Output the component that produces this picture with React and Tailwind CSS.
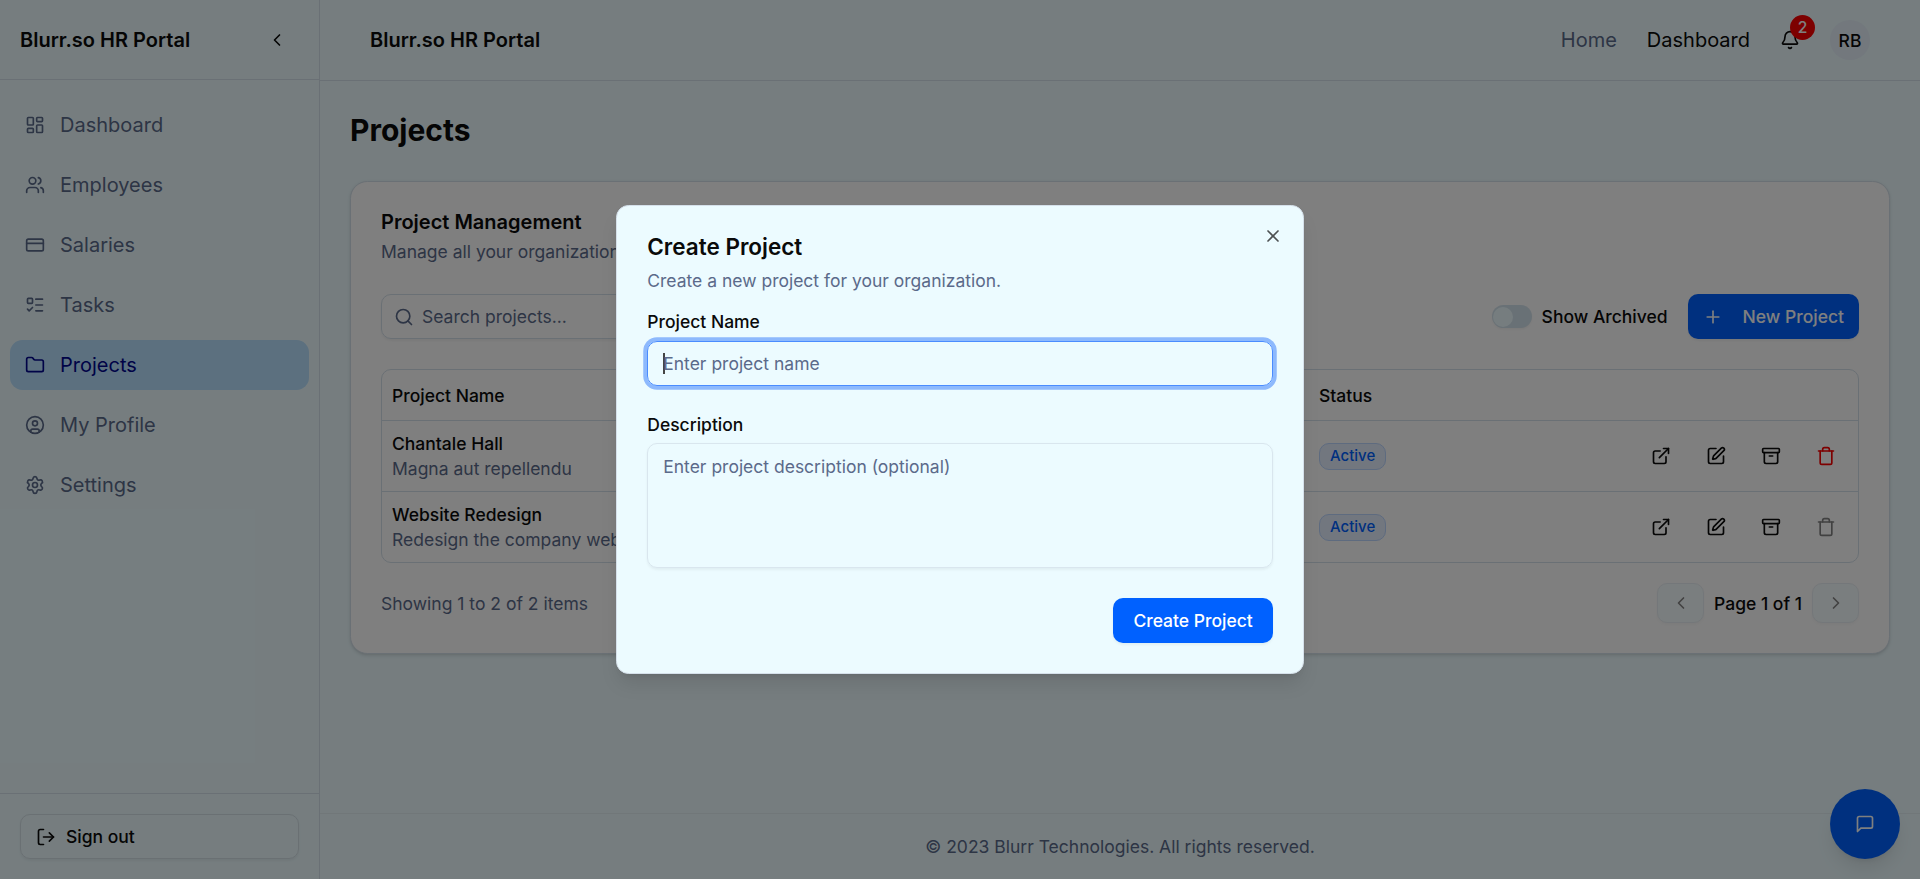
import React from "react";
import {
  Archive,
  Bell,
  ChevronLeft,
  ChevronRight,
  CreditCard,
  ExternalLink,
  Folder,
  LayoutDashboard,
  ListTodo,
  LogOut,
  Plus,
  Search,
  Settings,
  SquarePen,
  Users,
  X,
} from "lucide-react";

function UserCircle({ className }) {
  return (
    <svg className={className} viewBox="0 0 24 24" fill="none" stroke="currentColor" strokeWidth="2" strokeLinecap="round" strokeLinejoin="round">
      <circle cx="12" cy="12" r="10" />
      <circle cx="12" cy="10" r="3" />
      <path d="M7 20.662V19a2 2 0 0 1 2-2h6a2 2 0 0 1 2 2v1.662" />
    </svg>
  );
}

function Trash({ className }) {
  return (
    <svg className={className} viewBox="0 0 24 24" fill="none" stroke="currentColor" strokeWidth="2" strokeLinecap="round" strokeLinejoin="round">
      <path d="M3 6h18" />
      <path d="M19 6v14c0 1-1 2-2 2H7c-1 0-2-1-2-2V6" />
      <path d="M8 6V4c0-1 1-2 2-2h4c1 0 2 1 2 2v2" />
    </svg>
  );
}

function MessageSquare({ className }) {
  return (
    <svg className={className} viewBox="0 0 24 24" fill="none" stroke="currentColor" strokeWidth="2" strokeLinecap="round" strokeLinejoin="round">
      <path d="M21 15a2 2 0 0 1-2 2H7l-4 4V5a2 2 0 0 1 2-2h14a2 2 0 0 1 2 2z" />
    </svg>
  );
}

const navItems = [
  { label: "Dashboard", icon: LayoutDashboard },
  { label: "Employees", icon: Users },
  { label: "Salaries", icon: CreditCard },
  { label: "Tasks", icon: ListTodo },
  { label: "Projects", icon: Folder, active: true },
  { label: "My Profile", icon: UserCircle },
  { label: "Settings", icon: Settings },
];

const projects = [
  { name: "Chantale Hall", description: "Magna aut repellendu", canDelete: true },
  { name: "Website Redesign", description: "Redesign the company website", canDelete: false },
];

function Sidebar() {
  return (
    <aside className="flex w-64 shrink-0 flex-col border-r border-[#d5e0ea]">
      <div className="flex h-16 items-center justify-between border-b border-[#d5e0ea] px-4">
        <span className="font-semibold">Blurr.so HR Portal</span>
        <button className="flex size-9 items-center justify-center">
          <ChevronLeft className="size-4" />
        </button>
      </div>
      <nav className="flex flex-1 flex-col gap-2 px-2 py-4">
        {navItems.map(({ label, icon: Icon, active }) => (
          <a
            key={label}
            className={
              active
                ? "flex h-10 items-center gap-3 rounded-[10px] bg-[#b8e0fe] px-3 text-[#00068f]"
                : "flex h-10 items-center gap-3 rounded-[10px] px-3 text-[#5b6a8a]"
            }
          >
            <Icon className="size-4" />
            {label}
          </a>
        ))}
      </nav>
      <div className="border-t border-[#d5e0ea] p-4">
        <button className="flex h-9 w-full items-center gap-2 rounded-lg border border-[#d5e0e6] px-3 text-sm font-medium shadow-xs">
          <LogOut className="size-4" />
          Sign out
        </button>
      </div>
    </aside>
  );
}

function Header() {
  return (
    <header className="shrink-0 border-b border-[#d5e0ea] px-10">
      <div className="flex h-16 items-center justify-between">
        <span className="font-semibold">Blurr.so HR Portal</span>
        <div className="flex items-center gap-4">
          <nav className="flex items-center gap-6">
            <a className="text-[#5b6a8a]">Home</a>
            <a>Dashboard</a>
          </nav>
          <button className="relative flex size-8 items-center justify-center">
            <Bell className="size-4" />
            <span className="absolute -top-1 -right-1 flex size-5 items-center justify-center rounded-full bg-[#fb0000] text-[12.5px] font-medium text-white">
              2
            </span>
          </button>
          <span className="flex size-8 items-center justify-center rounded-full bg-[#e6f0fb] pt-px text-sm font-medium">RB</span>
        </div>
      </div>
    </header>
  );
}

function ProjectRow({ project, last }) {
  return (
    <div className={last ? "flex" : "flex border-b border-[#d5e0ea]"}>
      <div className="w-[741.6px] p-2">
        <div className="font-medium">{project.name}</div>
        <div className="text-[#5b6a8a]">{project.description}</div>
      </div>
      <div className="flex flex-1 items-center justify-between p-2">
        <span className="rounded-lg border border-[#bcd6ff] bg-[#e5efff] px-2 py-0.5 text-xs font-medium text-[#0061ff]">
          Active
        </span>
        <div className="flex gap-2">
          <button className="flex size-9 items-center justify-center"><ExternalLink className="size-4" /></button>
          <button className="flex size-9 items-center justify-center"><SquarePen className="size-4" /></button>
          <button className="flex size-9 items-center justify-center"><Archive className="size-4" /></button>
          <button className={project.canDelete ? "flex size-9 items-center justify-center text-[#fb0000]" : "flex size-9 items-center justify-center opacity-50"}>
            <Trash className="size-4" />
          </button>
        </div>
      </div>
    </div>
  );
}

function ProjectsCard() {
  return (
    <section className="flex flex-col gap-6 rounded-[14px] border border-[#d5e0ea] bg-white p-6 shadow-sm">
      <div className="flex flex-col gap-1.5">
        <h2 className="leading-none font-semibold">Project Management</h2>
        <p className="text-sm text-[#5b6a8a]">Manage all your organization's projects</p>
      </div>
      <div className="flex flex-col gap-4">
        <div className="mb-2 flex items-center justify-between">
          <div className="flex h-9 w-96 items-center gap-[6.4px] rounded-lg border border-[#d5e0ea] px-[9.6px] text-sm text-[#5b6a8a] shadow-xs">
            <Search className="size-4" />
            Search projects...
          </div>
          <div className="flex items-center gap-4">
            <div className="flex items-center gap-2 text-sm font-medium">
              <span className="flex h-[18.4px] w-8 items-center rounded-full border border-transparent bg-[#d3e2ec] shadow-xs">
                <span className="size-4 rounded-full bg-[#ecfbff]" />
              </span>
              Show Archived
            </div>
            <button className="flex h-9 items-center gap-2 rounded-lg bg-[#0061ff] px-3 text-sm font-medium text-white shadow-xs">
              <Plus className="mr-2 size-4" />
              New Project
            </button>
          </div>
        </div>
        <div className="rounded-lg border border-[#d5e0ea] text-sm">
          <div className="border-b border-[#d5e0ea] font-medium">
            <div className="flex h-10 items-center">
              <div className="w-[741.6px] px-2">Project Name</div>
              <div className="px-2">Status</div>
            </div>
          </div>
          {projects.map((project, i) => (
            <ProjectRow key={project.name} project={project} last={i === projects.length - 1} />
          ))}
        </div>
        <div className="flex items-center justify-between text-sm">
          <span className="text-[#5b6a8a]">Showing 1 to 2 of 2 items</span>
          <div className="flex items-center gap-2 font-medium">
            <button className="flex h-8 items-center rounded-lg border border-[#d5e0ea] bg-[#ecfbff] px-2.5 opacity-50 shadow-xs">
              <ChevronLeft className="size-4" />
            </button>
            Page 1 of 1
            <button className="flex h-8 items-center rounded-lg border border-[#d5e0ea] bg-[#ecfbff] px-2.5 opacity-50 shadow-xs">
              <ChevronRight className="size-4" />
            </button>
          </div>
        </div>
      </div>
    </section>
  );
}

function CreateProjectDialog() {
  return (
    <div className="relative w-[550px] rounded-[10px] border border-[#d5e0ea] bg-[#ecfbff] p-6 shadow-lg">
      <button className="absolute top-4 right-4 opacity-70">
        <X className="size-4" />
      </button>
      <div className="flex flex-col gap-2">
        <h2 className="text-lg leading-none font-semibold">Create Project</h2>
        <p className="text-sm text-[#5b6a8a]">Create a new project for your organization.</p>
      </div>
      <div className="mt-4 flex flex-col gap-6 text-sm">
        <div className="flex flex-col gap-2">
          <label className="leading-none font-medium">Project Name</label>
          <div className="flex h-9 items-center rounded-lg border border-[#4a8cff] px-3 text-[#5b6a8a] ring-[3px] ring-[#8db9fd]">
            <span className="-mr-px h-[17px] w-px bg-[#444]" />
            Enter project name
          </div>
        </div>
        <div className="flex flex-col gap-2">
          <label className="leading-none font-medium">Description</label>
          <div className="h-[100px] rounded-lg border border-[#d9e6ee] px-3 py-2 text-[#5b6a8a] shadow-xs">
            Enter project description (optional)
          </div>
        </div>
        <div className="flex justify-end">
          <button className="h-9 rounded-lg bg-[#0061ff] px-4 font-medium text-white shadow-xs">Create Project</button>
        </div>
      </div>
    </div>
  );
}

export default function App() {
  return (
    <div className="relative flex h-[703.2px] w-[1536px] overflow-hidden bg-[#ecfbff] font-['Inter',sans-serif] text-base text-[#0a0a0a] [zoom:1.25]">
      <Sidebar />
      <div className="flex flex-1 flex-col">
        <Header />
        <main className="flex-1 p-6">
          <h1 className="mb-[23.8px] text-2xl font-bold">Projects</h1>
          <ProjectsCard />
        </main>
        <footer className="border-t border-[#e2eef3] py-4 text-center text-sm text-[#5b6a8a]">
          © 2023 Blurr Technologies. All rights reserved.
        </footer>
      </div>
      <button className="absolute right-4 bottom-4 flex size-14 items-center justify-center rounded-full bg-[#0061ff] text-white shadow-lg">
        <MessageSquare className="size-4" />
      </button>
      <div className="absolute inset-0 flex items-center justify-center bg-black/50">
        <CreateProjectDialog />
      </div>
    </div>
  );
}
